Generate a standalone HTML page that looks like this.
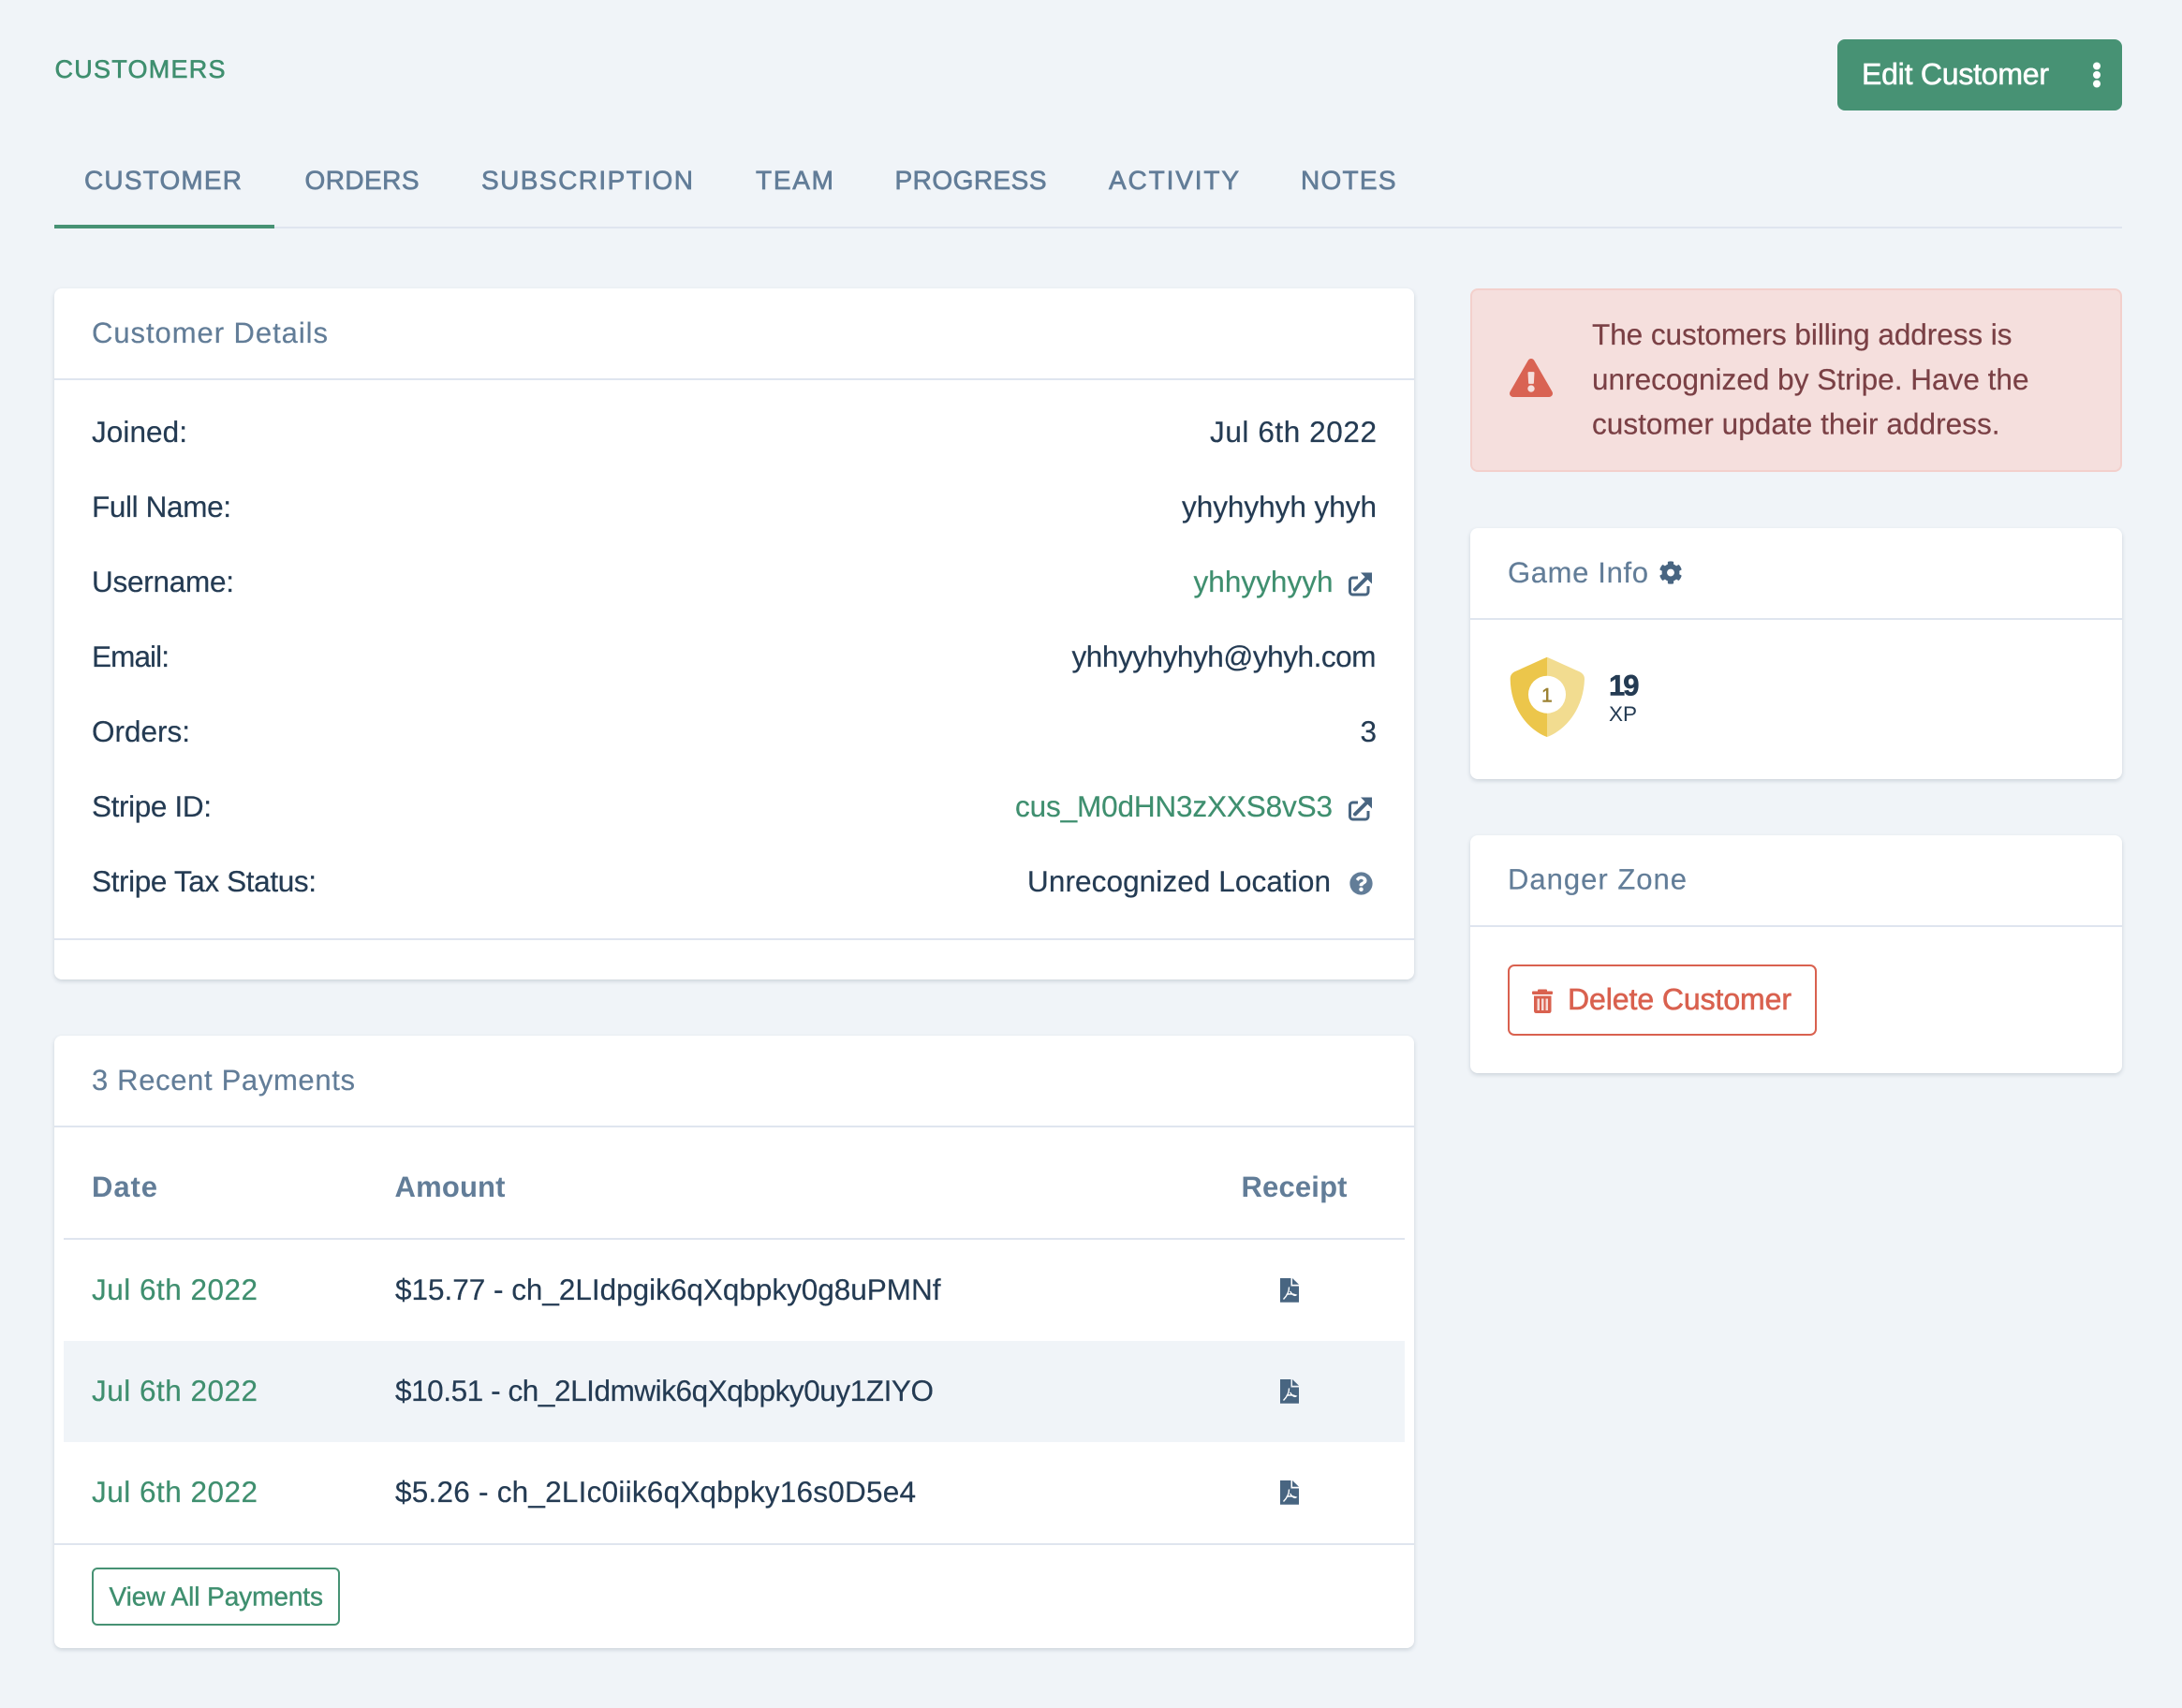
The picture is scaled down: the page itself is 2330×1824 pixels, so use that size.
<!DOCTYPE html>
<html lang="en"><head><meta charset="utf-8"><title>Customer</title>
<style>
html,body{margin:0;padding:0;width:2330px;height:1824px;overflow:hidden;background:#f0f4f8}
.b{position:absolute;box-sizing:border-box}
.card{background:#fff;border-radius:8px;box-shadow:0 2px 5px rgba(16,42,67,.16)}
.ln{background:#dfe5ef;height:2px}
svg{position:absolute;left:0;top:0}
text{font-family:"Liberation Sans",sans-serif;text-rendering:geometricPrecision}
.v{font-size:31.5px;fill:#243b53;stroke:#243b53;stroke-width:.2}
.l{font-size:31.5px;fill:#3f8f6f;stroke:#3f8f6f;stroke-width:.2}
.h{font-size:31px;fill:#627d98;stroke:#627d98;stroke-width:.2}
.t{font-size:28px;fill:#627d98;stroke:#627d98;stroke-width:.7}
.th{font-size:31px;fill:#627d98;font-weight:700}
.a{font-size:31.5px;fill:#7a4045;stroke:#7a4045;stroke-width:.2}
</style></head><body>
<div class="b" style="left:1962px;top:42px;width:304px;height:76px;background:#479274;border-radius:8px"></div>
<div class="b ln" style="left:58px;top:242px;width:2208px"></div>
<div class="b" style="left:58px;top:240px;width:235px;height:4px;background:#479274"></div>

<div class="b card" style="left:58px;top:308px;width:1452px;height:738px"></div>
<div class="b ln" style="left:58px;top:404px;width:1452px"></div>
<div class="b ln" style="left:58px;top:1002px;width:1452px"></div>

<div class="b card" style="left:58px;top:1106px;width:1452px;height:654px"></div>
<div class="b ln" style="left:58px;top:1202px;width:1452px"></div>
<div class="b ln" style="left:68px;top:1322px;width:1432px"></div>
<div class="b" style="left:68px;top:1432px;width:1432px;height:108px;background:#f0f4f8"></div>
<div class="b ln" style="left:58px;top:1648px;width:1452px"></div>
<div class="b" style="left:98px;top:1674px;width:265px;height:62px;border:2px solid #479274;border-radius:6px"></div>

<div class="b" style="left:1570px;top:308px;width:696px;height:196px;background:#f5dfdd;border:2px solid #f3d0cc;border-radius:8px"></div>

<div class="b card" style="left:1570px;top:564px;width:696px;height:268px"></div>
<div class="b ln" style="left:1570px;top:660px;width:696px"></div>

<div class="b card" style="left:1570px;top:892px;width:696px;height:254px"></div>
<div class="b ln" style="left:1570px;top:988px;width:696px"></div>
<div class="b" style="left:1610px;top:1030px;width:330px;height:76px;border:2px solid #d9614f;border-radius:7px"></div>

<svg width="2330" height="1824" viewBox="0 0 2330 1824" xmlns="http://www.w3.org/2000/svg">
<defs>
<g id="ext" fill="none" stroke="#486581">
<path d="M11 6H5.5A3 3 0 0 0 2.500 9V21a3 3 0 0 0 3 3H19a3 3 0 0 0 3-3v-6" stroke-width="3"/>
<path d="M8 18.500L21 5.500" stroke-width="4" stroke-linecap="round"/>
<path d="M14 .5H26V12.500Z" fill="#486581" stroke="none"/>
</g>
<g id="pdf">
<path d="M0 0H11.500V8.500H20V25.700H0Z" fill="#486581"/>
<path d="M13 0L20 6.800H13Z" fill="#486581"/>
<path d="M9.500 9.500C9.500 13 8 18 3.500 22.500M6.500 17.500C10 16.500 13 16.500 17 18C15 19.500 12.500 17 10.500 14" fill="none" stroke="#fff" stroke-width="1.400"/>
</g>
</defs>

<text x="58.500" y="83" class="l" style="font-size:27px;stroke-width:.6" textLength="182">CUSTOMERS</text>
<text x="1988" y="90" style="font-size:32px;fill:#fff;stroke:#fff;stroke-width:.6" textLength="200">Edit Customer</text>
<circle cx="2239" cy="70.500" r="4" fill="#fff"/><circle cx="2239" cy="80" r="4" fill="#fff"/><circle cx="2239" cy="89.500" r="4" fill="#fff"/>

<text x="90" y="202" class="t" textLength="168">CUSTOMER</text>
<text x="325.500" y="202" class="t" textLength="122">ORDERS</text>
<text x="514" y="202" class="t" textLength="226">SUBSCRIPTION</text>
<text x="807" y="202" class="t" textLength="83">TEAM</text>
<text x="955.500" y="202" class="t" textLength="162">PROGRESS</text>
<text x="1184" y="202" class="t" textLength="139">ACTIVITY</text>
<text x="1389" y="202" class="t" textLength="101.500">NOTES</text>

<text x="98" y="366" class="h" textLength="252">Customer Details</text>
<text x="98" y="472" class="v" textLength="102">Joined:</text>
<text x="98" y="552" class="v" textLength="149">Full Name:</text>
<text x="98" y="632" class="v" textLength="152">Username:</text>
<text x="98" y="712" class="v" textLength="83">Email:</text>
<text x="98" y="792" class="v" textLength="105">Orders:</text>
<text x="98" y="872" class="v" textLength="128">Stripe ID:</text>
<text x="98" y="952" class="v" textLength="240">Stripe Tax Status:</text>

<text x="1292" y="472" class="v" textLength="178">Jul 6th 2022</text>
<text x="1262" y="552" class="v" textLength="208">yhyhyhyh yhyh</text>
<text x="1274.500" y="632" class="l" textLength="149">yhhyyhyyh</text>
<use href="#ext" x="1439" y="611"/>
<text x="1144.500" y="712" class="v" textLength="325">yhhyyhyhyh@yhyh.com</text>
<text x="1452.500" y="792" class="v" textLength="16.500">3</text>
<text x="1084" y="872" class="l" textLength="339">cus_M0dHN3zXXS8vS3</text>
<use href="#ext" x="1439" y="851"/>
<text x="1097" y="952" class="v" textLength="324">Unrecognized Location</text>
<svg x="1441" y="931" width="25" height="25" viewBox="0 0 512 512"><path fill="#627d98" d="M504 256c0 136.997-111.043 248-248 248S8 392.997 8 256C8 119.083 119.043 8 256 8s248 111.083 248 248zM262.655 90c-54.497 0-89.255 22.957-116.549 63.758-3.536 5.286-2.353 12.415 2.715 16.258l34.699 26.31c5.205 3.947 12.621 3.008 16.665-2.122 17.864-22.658 30.113-35.797 57.303-35.797 20.429 0 45.698 13.148 45.698 32.958 0 14.976-12.363 22.667-32.534 33.976C247.128 238.528 216 254.941 216 296v4c0 6.627 5.373 12 12 12h56c6.627 0 12-5.373 12-12v-1.333c0-28.462 83.186-29.647 83.186-106.667 0-58.002-60.165-102-116.531-102zM256 338c-25.365 0-46 20.635-46 46 0 25.364 20.635 46 46 46s46-20.636 46-46c0-25.365-20.635-46-46-46z"/></svg>

<text x="98" y="1164" class="h" textLength="281">3 Recent Payments</text>
<text x="98" y="1278" class="th" textLength="70">Date</text>
<text x="421.500" y="1278" class="th" textLength="118">Amount</text>
<text x="1325.500" y="1278" class="th" textLength="113">Receipt</text>

<text x="98" y="1388" class="l" textLength="177">Jul 6th 2022</text>
<text x="422" y="1388" class="v" textLength="582.500">$15.77 - ch_2LIdpgik6qXqbpky0g8uPMNf</text>
<use href="#pdf" x="1367" y="1365"/>
<text x="98" y="1496" class="l" textLength="177">Jul 6th 2022</text>
<text x="422" y="1496" class="v" textLength="575">$10.51 - ch_2LIdmwik6qXqbpky0uy1ZIYO</text>
<use href="#pdf" x="1367" y="1473"/>
<text x="98" y="1604" class="l" textLength="177">Jul 6th 2022</text>
<text x="422" y="1604" class="v" textLength="556">$5.26 - ch_2LIc0iik6qXqbpky16s0D5e4</text>
<use href="#pdf" x="1367" y="1581"/>
<text x="116.500" y="1714.500" style="font-size:28px;fill:#3f8f6f;stroke:#3f8f6f;stroke-width:.4" textLength="228.500">View All Payments</text>

<svg x="1612" y="383" width="46" height="41" viewBox="0 0 576 512"><path fill="#d96353" d="M569.517 440.013C587.975 472.007 564.806 512 527.94 512H48.054c-36.937 0-59.999-40.055-41.577-71.987L246.423 23.985c18.467-32.009 64.72-31.951 83.154 0l239.94 416.028zM288 354c-25.405 0-46 20.595-46 46s20.595 46 46 46 46-20.595 46-46-20.595-46-46-46zm-43.673-165.346l7.418 136c.347 6.364 5.609 11.346 11.982 11.346h48.546c6.373 0 11.635-4.982 11.982-11.346l7.418-136c.375-6.874-5.098-12.654-11.982-12.654h-63.383c-6.884 0-12.356 5.78-11.981 12.654z"/></svg>
<text x="1700" y="368" class="a" textLength="448.500">The customers billing address is</text>
<text x="1700" y="416" class="a" textLength="466.500">unrecognized by Stripe. Have the</text>
<text x="1700" y="463.500" class="a" textLength="435.500">customer update their address.</text>

<text x="1610" y="622" class="h" textLength="150">Game Info</text>
<svg x="1771.500" y="599" width="25" height="25" viewBox="0 0 512 512"><path fill="#486581" d="M487.4 315.7l-42.6-24.6c4.3-23.2 4.3-47 0-70.2l42.6-24.6c4.9-2.8 7.1-8.6 5.500-14-11.100-35.6-30-67.8-54.7-94.6-3.8-4.1-10-5.1-14.8-2.3L380.8 110c-17.9-15.4-38.5-27.3-60.8-35.1V25.8c0-5.6-3.9-10.5-9.4-11.7-36.7-8.2-74.3-7.8-109.2 0-5.5 1.2-9.4 6.1-9.4 11.7V75c-22.2 7.9-42.8 19.8-60.8 35.100L88.7 85.500c-4.9-2.8-11-1.9-14.8 2.3-24.7 26.700-43.6 58.900-54.7 94.600-1.7 5.400.6 11.200 5.500 14L67.3 221c-4.3 23.200-4.3 47 0 70.200l-42.600 24.600c-4.900 2.800-7.100 8.600-5.500 14 11.100 35.600 30 67.800 54.700 94.600 3.800 4.100 10 5.100 14.800 2.300l42.600-24.600c17.900 15.400 38.500 27.300 60.800 35.100v49.200c0 5.600 3.900 10.500 9.400 11.700 36.700 8.200 74.300 7.800 109.200 0 5.500-1.200 9.400-6.100 9.400-11.700v-49.200c22.200-7.900 42.800-19.800 60.800-35.100l42.600 24.600c4.900 2.800 11 1.900 14.800-2.300 24.700-26.700 43.600-58.900 54.700-94.600 1.500-5.500-.7-11.300-5.600-14.100zM256 336c-44.100 0-80-35.900-80-80s35.900-80 80-80 80 35.900 80 80-35.900 80-80 80z"/></svg>

<path d="M1652 701.700C1640 707 1628 712.500 1618 717C1614.500 718.700 1612.700 721 1612.700 725C1613 758 1633 780 1652 787Z" fill="#ecc64b"/>
<path d="M1652 701.700C1664 707 1676 712.500 1686 717C1689.500 718.700 1692 721 1692 725C1691 758 1671 780 1652 787Z" fill="#f2dc90"/>
<circle cx="1652" cy="741.700" r="20" fill="#fff"/>
<text x="1646" y="749.500" style="font-size:21px;fill:#9c8233;stroke:#9c8233;stroke-width:.5" textLength="11">1</text>
<text x="1718" y="742.500" style="font-size:31px;font-weight:700;fill:#243b53;stroke:#243b53;stroke-width:.6" textLength="32.500">19</text>
<text x="1718" y="770" style="font-size:22.500px;fill:#243b53" textLength="30">XP</text>

<text x="1610" y="949.500" class="h" textLength="191">Danger Zone</text>
<path d="M1642 1058.500V1057.500Q1642 1056.500 1643 1056.500H1651Q1652 1056.500 1652 1057.500V1058.500H1657Q1658 1058.500 1658 1059.500V1061Q1658 1062 1657 1062H1637Q1636 1062 1636 1061V1059.500Q1636 1058.500 1637 1058.500Z" fill="#d9614f"/>
<path d="M1638 1063.500H1656.500V1079.500Q1656.500 1082 1654 1082H1640.500Q1638 1082 1638 1079.500Z" fill="#d9614f"/>
<path d="M1641.500 1066.500h2.500v12.500h-2.500zM1646 1066.500h2.500v12.500h-2.500zM1650.500 1066.500h2.500v12.500h-2.500z" fill="#f6dcd7"/>
<text x="1674" y="1078" style="font-size:32px;fill:#d9614f;stroke:#d9614f;stroke-width:.6" textLength="239">Delete Customer</text>
</svg>
</body></html>
